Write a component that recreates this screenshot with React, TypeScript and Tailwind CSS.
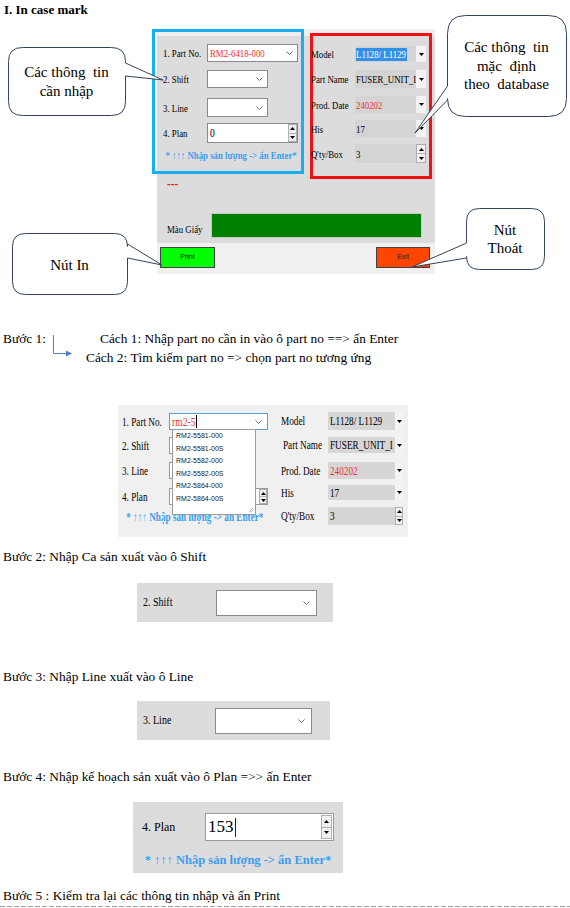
import React from "react";

function Sq({ children, className = "" }: { children: React.ReactNode; className?: string }) {
  return <span className={`inline-block whitespace-nowrap origin-left scale-x-80 ${className}`}>{children}</span>;
}

const Chev = () => (
  <svg width="7" height="4" viewBox="0 0 7 4" className="shrink-0">
    <path d="M0.5 0.5 L3.5 3.5 L6.5 0.5" fill="none" stroke="#707070" strokeWidth="1" />
  </svg>
);

const TriDown = () => (
  <svg width="5" height="3" viewBox="0 0 5 3">
    <path d="M0 0H5L2.5 3Z" fill="#000" />
  </svg>
);
const TriUp = () => (
  <svg width="5" height="3" viewBox="0 0 5 3">
    <path d="M0 3H5L2.5 0Z" fill="#000" />
  </svg>
);

function Spin({ className }: { className: string }) {
  return (
    <div className={`flex flex-col shrink-0 ${className}`}>
      <div className="flex-1 flex items-center justify-center bg-[#f0f0f0] border border-[#b0b0b0]">
        <TriUp />
      </div>
      <div className="flex-1 flex items-center justify-center bg-[#f0f0f0] border border-t-0 border-[#b0b0b0]">
        <TriDown />
      </div>
    </div>
  );
}

function bubbleRight(x: number, y: number, w: number, h: number, r: number, y1: number, y2: number, tx: number, ty: number) {
  return `M${x + r},${y} H${x + w - r} Q${x + w},${y} ${x + w},${y + r} V${y1} L${tx},${ty} L${x + w},${y2} V${y + h - r} Q${x + w},${y + h} ${x + w - r},${y + h} H${x + r} Q${x},${y + h} ${x},${y + h - r} V${y + r} Q${x},${y} ${x + r},${y} Z`;
}
function bubbleLeft(x: number, y: number, w: number, h: number, r: number, y1: number, y2: number, tx: number, ty: number) {
  return `M${x + r},${y} H${x + w - r} Q${x + w},${y} ${x + w},${y + r} V${y + h - r} Q${x + w},${y + h} ${x + w - r},${y + h} H${x + r} Q${x},${y + h} ${x},${y + h - r} V${y2} L${tx},${ty} L${x},${y1} V${y + r} Q${x},${y} ${x + r},${y} Z`;
}

function RightField({ children, spin = false, h }: { children?: React.ReactNode; spin?: boolean; h: string }) {
  return (
    <div className={`w-[71px] flex ${h}`}>
      <div className="flex-1 bg-[#d4d4d4] flex items-center pl-[1px] overflow-hidden">{children}</div>
      {spin ? (
        <Spin className="w-[10px]" />
      ) : (
        <div className="w-[10px] bg-[#f3f3f3] flex items-center justify-center">
          <TriDown />
        </div>
      )}
    </div>
  );
}

function TopForm() {
  return (
    <div className="ml-[157px] w-[278px] h-[245px] flex flex-col">
      <div className="h-[214px] bg-[linear-gradient(to_bottom,#efefef_7px,#dcdcdc_7px)] flex flex-col">
        <div className="flex items-start h-[150px]">
          {/* blue box */}
          <div className="ml-[-5px] w-[152px] h-[145px] border-[3px] border-[#19aef0] flex flex-col shrink-0 text-[11px] leading-[14px]">
            <div className="flex items-center mt-[12px] h-[18px] pl-[8px]">
              <div className="w-[44px]"><Sq>1. Part No.</Sq></div>
              <div className="w-[91px] h-full bg-white border border-[#8a8a8a] flex items-center justify-between pl-[2px] pr-[4px] overflow-hidden">
                <Sq className="text-[#f03030]">RM2-6418-000</Sq>
                <Chev />
              </div>
            </div>
            <div className="flex items-center mt-[8px] h-[18px] pl-[8px]">
              <div className="w-[44px]"><Sq>2. Shift</Sq></div>
              <div className="w-[61px] h-full bg-white border border-[#8a8a8a] flex items-center justify-end pr-[4px]">
                <Chev />
              </div>
            </div>
            <div className="flex items-center mt-[10px] h-[19px] pl-[8px]">
              <div className="w-[44px]"><Sq>3. Line</Sq></div>
              <div className="w-[61px] h-full bg-white border border-[#8a8a8a] flex items-center justify-end pr-[4px]">
                <Chev />
              </div>
            </div>
            <div className="flex items-center mt-[6px] h-[20px] pl-[8px]">
              <div className="w-[44px]"><Sq>4. Plan</Sq></div>
              <div className="w-[91px] h-full bg-white border border-[#8a8a8a] flex items-stretch justify-between pl-[2px]">
                <div className="flex items-center text-[12px]"><Sq>0</Sq></div>
                <Spin className="w-[9px]" />
              </div>
            </div>
            <div className="mt-[4px] h-[16px] flex items-center justify-center pl-[6px] font-bold text-[#3c9cf0]">
              <span className="inline-block whitespace-nowrap scale-x-80">* ↑↑↑ Nhập sản lượng -&gt; ấn Enter*</span>
            </div>
          </div>
          {/* red box */}
          <div className="ml-[6px] mt-[4px] w-[122px] h-[146px] border-[3px] border-[#f01212] flex flex-col shrink-0 text-[11px] leading-[14px]">
            <div className="flex items-center mt-[10px] h-[16px]">
              <div className="w-[42px] ml-[-2px] mr-[2px]"><Sq>Model</Sq></div>
              <RightField h="h-[16px]">
                <span className="bg-[#3390e8] text-white inline-block leading-[13px] w-[51px] overflow-visible">
                  <Sq>L1128/ L1129</Sq>
                </span>
              </RightField>
            </div>
            <div className="flex items-center mt-[8px] h-[18px]">
              <div className="w-[42px] ml-[-2px] mr-[2px]"><Sq>Part Name</Sq></div>
              <RightField h="h-[18px]">
                <Sq>FUSER_UNIT_I</Sq>
              </RightField>
            </div>
            <div className="flex items-center mt-[8px] h-[17px]">
              <div className="w-[42px] ml-[-2px] mr-[2px]"><Sq>Prod. Date</Sq></div>
              <RightField h="h-[17px]">
                <Sq className="text-[#f03030]">240202</Sq>
              </RightField>
            </div>
            <div className="flex items-center mt-[7px] h-[17px]">
              <div className="w-[42px] ml-[-2px] mr-[2px]"><Sq>His</Sq></div>
              <RightField h="h-[17px]">
                <Sq>17</Sq>
              </RightField>
            </div>
            <div className="flex items-center mt-[7px] h-[19px]">
              <div className="w-[42px] ml-[-2px] mr-[2px]"><Sq>Q'ty/Box</Sq></div>
              <RightField h="h-[19px]" spin>
                <Sq>3</Sq>
              </RightField>
            </div>
          </div>
        </div>
        <div className="h-[10px] pl-[10px] text-[14px] leading-[10px] font-bold text-[#ff1a1a] overflow-visible">
          <Sq>---</Sq>
        </div>
        <div className="mt-[24px] h-[25px] flex items-center pl-[10px]">
          <div className="w-[44px] text-[11px] leading-[14px] pt-[6px]"><Sq>Màu Giấy</Sq></div>
          <div className="w-[211px] h-full bg-[#008000] border border-[#c8c8c8]" />
        </div>
      </div>
      <div className="h-[31px] bg-[#f0f0f0] flex justify-between items-start pt-[4px] pl-[3px] pr-[5px]">
        <div className="w-[55px] h-[21px] bg-[#00ff00] border border-[#404040] flex items-center justify-center text-[7px] font-['Liberation_Sans',sans-serif]">Print</div>
        <div className="w-[54px] h-[21px] bg-[#ff4500] border border-[#404040] flex items-center justify-center text-[7px] font-['Liberation_Sans',sans-serif] text-[#222]">Exit</div>
      </div>
    </div>
  );
}

function GrayField({ h, children, button = "tri" }: { h: string; children?: React.ReactNode; button?: "tri" | "spin" }) {
  return (
    <div className={`flex w-[75px] ${h}`}>
      <div className="w-[67px] bg-[#d6d6d6] flex items-center pl-[2px] overflow-hidden">{children}</div>
      {button === "spin" ? (
        <Spin className="w-[8px]" />
      ) : (
        <div className="w-[8px] bg-[#f4f4f4] flex items-center justify-center">
          <TriDown />
        </div>
      )}
    </div>
  );
}

function DropdownShot() {
  const items = ["RM2-5581-000", "RM2-5581-00S", "RM2-5582-000", "RM2-5582-00S", "RM2-5864-000", "RM2-5864-00S"];
  return (
    <div className="ml-[118px] mt-[37px] w-[290px] h-[133px] bg-[#f0f0f0] border-t border-white relative flex text-[11.5px] leading-[14px]">
      <div className="flex flex-col pl-[4px] w-[150px]">
        <div className="flex items-center mt-[8px] h-[17px]">
          <div className="w-[47px]"><Sq>1. Part No.</Sq></div>
          <div className="w-[99px] h-full bg-white border border-[#5b9be0] flex items-center justify-between pl-[2px] pr-[5px]">
            <div className="flex items-center">
              <Sq className="text-[#f03030] text-[12px]">rm2-5</Sq>
              <span className="w-[1px] h-[13px] bg-black ml-[-5px]" />
            </div>
            <Chev />
          </div>
        </div>
        <div className="flex items-center mt-[7px] h-[17px]">
          <div className="w-[47px]"><Sq>2. Shift</Sq></div>
          <div className="w-[61px] h-full bg-white border border-[#9a9a9a]" />
        </div>
        <div className="flex items-center mt-[8px] h-[17px]">
          <div className="w-[47px]"><Sq>3. Line</Sq></div>
          <div className="w-[61px] h-full bg-white border border-[#9a9a9a]" />
        </div>
        <div className="flex items-center mt-[9px] h-[17px]">
          <div className="w-[47px]"><Sq>4. Plan</Sq></div>
          <div className="w-[99px] h-full bg-white border border-[#9a9a9a] flex justify-end">
            <Spin className="w-[8px]" />
          </div>
        </div>
        <div className="mt-[5px] h-[14px] flex items-center justify-center font-bold text-[#3c9cf0] text-[11.5px]">
          <span className="inline-block whitespace-nowrap scale-x-80">* ↑↑↑ Nhập sản lượng -&gt; ấn Enter*</span>
        </div>
      </div>
      <div className="flex flex-col ml-[13px]">
        <div className="flex items-center mt-[7px] h-[18px]">
          <div className="w-[47px]"><Sq>Model</Sq></div>
          <GrayField h="h-[18px]"><Sq>L1128/ L1129</Sq></GrayField>
        </div>
        <div className="flex items-center mt-[7px] h-[16px]">
          <div className="w-[47px] pl-[2px]"><Sq>Part Name</Sq></div>
          <GrayField h="h-[16px]"><Sq>FUSER_UNIT_I</Sq></GrayField>
        </div>
        <div className="flex items-center mt-[9px] h-[17px]">
          <div className="w-[47px]"><Sq>Prod. Date</Sq></div>
          <GrayField h="h-[17px]"><Sq className="text-[#f03030]">240202</Sq></GrayField>
        </div>
        <div className="flex items-center mt-[6px] h-[15px]">
          <div className="w-[47px]"><Sq>His</Sq></div>
          <GrayField h="h-[15px]"><Sq>17</Sq></GrayField>
        </div>
        <div className="flex items-center mt-[7px] h-[18px]">
          <div className="w-[47px]"><Sq>Q'ty/Box</Sq></div>
          <GrayField h="h-[18px]" button="spin"><Sq>3</Sq></GrayField>
        </div>
      </div>
      {/* dropdown list overlay */}
      <div className="absolute left-[54px] top-[24px] w-[84px] h-[86px] z-10 bg-white border border-[#9c9c9c] font-['Liberation_Sans',sans-serif] text-[7px] text-[#222] pl-[3px]">
        {items.map((t) => (
          <div key={t} className="h-[12.5px] leading-[12.5px]">{t}</div>
        ))}
        <svg width="6" height="6" viewBox="0 0 6 6" className="absolute right-[1px] bottom-[1px]">
          <path d="M5 1 L1 5 M5 3 L3 5" stroke="#b0b0b0" strokeWidth="1" />
        </svg>
      </div>
    </div>
  );
}

function StepLine({ children, className = "" }: { children: React.ReactNode; className?: string }) {
  return <div className={`h-[19px] leading-[19px] pl-[3px] whitespace-nowrap ${className}`}>{children}</div>;
}

export default function App() {
  return (
    <div className="relative w-[570px] h-[908px] overflow-hidden bg-white text-black font-['Liberation_Serif','Times_New_Roman',serif]">
      <div className="h-[19px] pl-[4px] pt-[2px] text-[13px] font-bold leading-[16px]">I. In case mark</div>

      <div className="h-[281px] pt-[10px]">
        <TopForm />
      </div>

      {/* Step 1 */}
      <div className="pt-[29px] flex text-[13.4px] leading-[19px]">
        <div className="w-[50px] pl-[3px] whitespace-nowrap">Bước 1:</div>
        <div className="w-[36px] h-[38px]">
          <svg width="36" height="38" viewBox="0 0 36 38">
            <path d="M3.5 6 V24.5 H17" fill="none" stroke="#4f7fc8" strokeWidth="1" />
            <path d="M16 21.5 L22 24.5 L16 27.5 Z" fill="#4f7fc8" />
          </svg>
        </div>
        <div className="flex flex-col whitespace-nowrap">
          <div className="h-[19px] pl-[14px]">Cách 1: Nhập part no cần in vào ô part no ==&gt; ấn Enter</div>
          <div className="h-[19px]">Cách 2: Tìm kiếm part no =&gt; chọn part no tương ứng</div>
        </div>
      </div>

      <DropdownShot />

      <div className="text-[13.4px]">
        <StepLine className="mt-[10px]">Bước 2: Nhập Ca sản xuất vào ô Shift</StepLine>
        <div className="ml-[137px] mt-[17px] w-[196px] h-[39px] bg-[#dcdcdc] flex items-center pl-[6px]">
          <div className="w-[73px] text-[12.5px]"><Sq>2. Shift</Sq></div>
          <div className="w-[101px] h-[26px] bg-white border border-[#8a8a8a] flex items-center justify-end pr-[6px]">
            <Chev />
          </div>
        </div>

        <StepLine className="mt-[45px]">Bước 3: Nhập Line xuất vào ô Line</StepLine>
        <div className="ml-[137px] mt-[15px] w-[193px] h-[39px] bg-[#dcdcdc] flex items-center pl-[6px]">
          <div className="w-[72px] text-[12.5px]"><Sq>3. Line</Sq></div>
          <div className="w-[97px] h-[26px] bg-white border border-[#8a8a8a] flex items-center justify-end pr-[6px]">
            <Chev />
          </div>
        </div>

        <StepLine className="mt-[27px]">Bước 4: Nhập kế hoạch sản xuất vào ô Plan =&gt;&gt; ấn Enter</StepLine>
        <div className="ml-[133px] mt-[16px] w-[210px] h-[71px] bg-[#dcdcdc] flex flex-col">
          <div className="flex items-center mt-[11px] h-[28px] pl-[9px]">
            <div className="w-[63px] text-[12px]">4. Plan</div>
            <div className="w-[129px] h-full bg-white border border-[#9a9a9a] flex justify-between items-stretch pl-[2px] py-[1px] pr-[1px]">
              <div className="flex items-center text-[17px] font-['Liberation_Serif',serif]">
                153<span className="w-[1px] h-[19px] bg-[#222] ml-[1px]" />
              </div>
              <Spin className="w-[11px]" />
            </div>
          </div>
          <div className="mt-[10px] h-[18px] leading-[18px] text-center font-bold text-[#3c9cf0] text-[12.5px] whitespace-nowrap">
            * ↑↑↑ Nhập sản lượng -&gt; ấn Enter*
          </div>
        </div>

        <div className="mt-[13px] h-[20px] leading-[19px] pl-[3px] whitespace-nowrap">Bước 5 : Kiểm tra lại các thông tin nhập và ấn Print</div>
        <div className="h-[1px] w-[570px] bg-[repeating-linear-gradient(to_right,#a0a0a0_0_5px,transparent_5px_7px)]" />
      </div>

      {/* Callout overlays */}
      <svg width="570" height="300" viewBox="0 0 570 300" className="absolute left-0 top-0 pointer-events-none z-20">
        <g fill="white" stroke="#34445f" strokeWidth="1">
          <path d={bubbleRight(8.5, 47.5, 117, 68, 14, 63, 76, 163, 80)} />
          <path d={bubbleLeft(447.5, 15.5, 119, 101, 18, 86, 100, 415, 133)} />
          <path d={bubbleRight(12.5, 233.5, 115, 61, 13, 244, 258, 162, 265)} />
          <path d={bubbleLeft(466.5, 208.5, 78, 61, 13, 243, 258, 412, 267)} />
        </g>
      </svg>
      <div className="absolute left-[8px] top-[63px] w-[117px] z-30 text-center text-[15px] leading-[19px] whitespace-pre">
        {"Các thông  tin\ncần nhập"}
      </div>
      <div className="absolute left-[447px] top-[38px] w-[119px] z-30 text-center text-[15px] leading-[18.5px] whitespace-pre">
        {"Các thông  tin\nmặc  định\ntheo  database"}
      </div>
      <div className="absolute left-[12px] top-[255px] w-[115px] z-30 text-center text-[15px] leading-[20px]">
        Nút In
      </div>
      <div className="absolute left-[466px] top-[221px] w-[78px] z-30 text-center text-[15px] leading-[18px] whitespace-pre">
        {"Nút\nThoát"}
      </div>
    </div>
  );
}
